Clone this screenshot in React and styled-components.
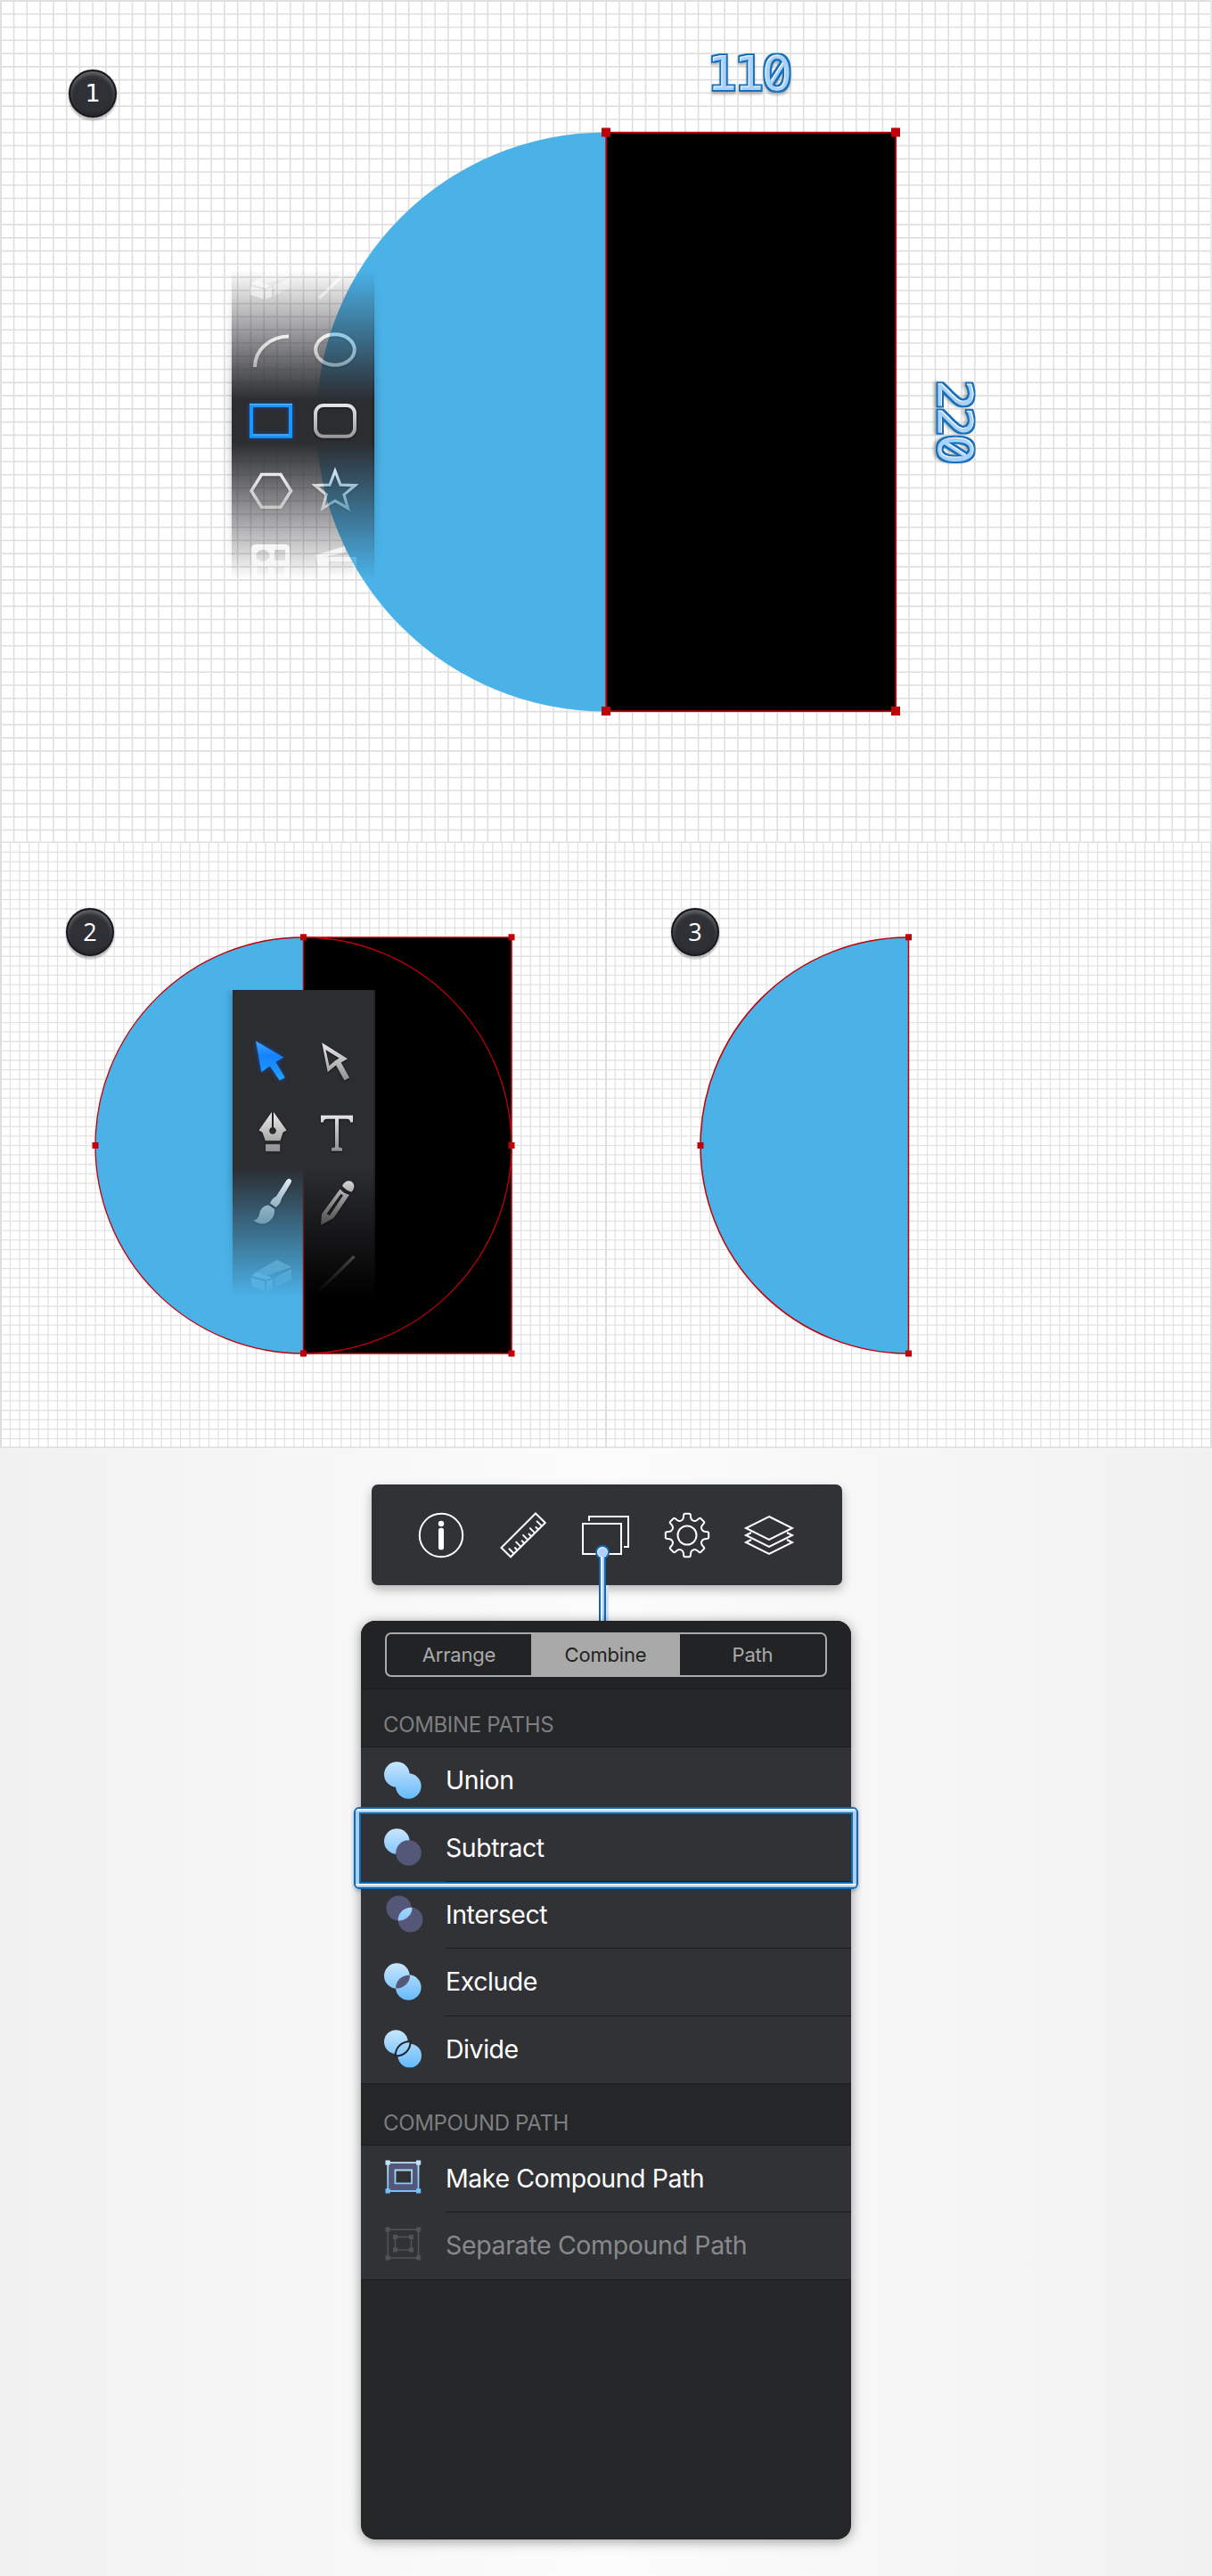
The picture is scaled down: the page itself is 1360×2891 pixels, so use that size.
import React from "react";
import styled, { createGlobalStyle, css } from "styled-components";

const BLUE = "#4bb2e8";
const RED = "#bf0008";
const UI = '"Inter", "Liberation Sans", sans-serif';

const GlobalStyle = createGlobalStyle`
  * { box-sizing: border-box; }
  body { margin: 0; background: #fff; }
`;

const Page = styled.main`
  width: 1360px;
  height: 2891px;
  display: flex;
  flex-direction: column;
  overflow: hidden;
  font-family: ${UI};
`;

const Split = styled.div`
  display: grid;
  grid-template-columns: 679px 681px;
`;

const Stage = styled.section`
  position: relative;
  height: ${(p) => p.$height}px;
`;

const Artboard = styled.svg`
  display: block;
  width: 100%;
  height: 100%;
`;

const Badge = styled.span`
  position: absolute;
  left: ${(p) => p.$x}px;
  top: ${(p) => p.$y}px;
  width: 54px;
  height: 54px;
  border-radius: 50%;
  border: 2px solid #17181c;
  background: #303136;
  box-shadow: inset 0 3px 4px rgba(255, 255, 255, 0.32), inset 0 0 5px rgba(0, 0, 0, 0.5),
    0 4px 1px rgba(0, 0, 0, 0.14), 0 1px 3px rgba(0, 0, 0, 0.25);
  display: flex;
  align-items: center;
  justify-content: center;
  color: #fff;
  font: 400 27px/50px "Open Sans", "Noto Sans", sans-serif;
  ${(p) => p.$footed && css`font-family: "DejaVu Sans", sans-serif;`}
`;

const Measure = styled.span`
  position: absolute;
  left: ${(p) => p.$x}px;
  top: ${(p) => p.$y}px;
  width: 100px;
  height: 56px;
  display: flex;
  justify-content: center;
  font: 400 54px/56px "DejaVu Sans", sans-serif;
  letter-spacing: -4px;
  color: #a9d1fa;
  filter: url(#bevel);
  transform: rotate(${(p) => p.$turn || 0}deg);
`;

const Zero = styled.span`
  position: relative;

  &::after {
    content: "";
    position: absolute;
    left: 15.2px;
    top: 13.5px;
    width: 4px;
    height: 27px;
    background: #a9d1fa;
    transform: rotate(33deg);
  }
`;

const StripFade = styled.div`
  position: absolute;
  left: ${(p) => p.$x}px;
  top: ${(p) => p.$y}px;
  padding: 0 12px;
  mask-image: linear-gradient(${(p) => p.$fade});
`;

const Strip = styled.div`
  width: 160px;
  padding: ${(p) => p.$top || 0}px 8px 0 8px;
  display: grid;
  grid-template-columns: 72px 72px;
  grid-auto-rows: 79px;
  place-items: center;
  background: #2c2d31;
  box-shadow: inset -2px 0 #222327, 0 0 10px rgba(0, 0, 0, 0.35);
`;

const ToolIcon = styled.svg`
  width: 54px;
  height: 54px;
  margin-bottom: 1px;
  overflow: visible;
  filter: ${(p) =>
    p.$active
      ? "drop-shadow(0 0 2px rgba(0, 100, 255, 0.7))"
      : "drop-shadow(0 1px 1px rgba(0, 0, 0, 0.55))"};
`;

const Inspector = styled.section`
  height: 1266px;
  display: flex;
  flex-direction: column;
  align-items: center;
  padding-top: 41px;
  gap: 40px;
  background: linear-gradient(90deg, #f1f1f1, #f8f8f8 32%, #fcfcfc 50%, #f8f8f8 68%, #f1f1f1);
`;

const Toolbar = styled.nav`
  position: relative;
  left: 1px;
  width: 528px;
  height: 113px;
  padding-left: 51px;
  display: flex;
  align-items: center;
  gap: 38px;
  border-radius: 7px;
  background: #313236;
  box-shadow: 0 5px 12px rgba(0, 0, 0, 0.28);
`;

const BarIcon = styled.svg`
  width: 54px;
  height: 54px;
  fill: none;
  stroke: #fff;
  stroke-width: 2;
  overflow: visible;
`;

const Connector = styled.svg`
  position: absolute;
  left: 249px;
  top: 66px;
  width: 20px;
  height: 87px;
`;

const Menu = styled.div`
  width: 550px;
  height: 1031px;
  display: flex;
  flex-direction: column;
  border-radius: 16px;
  background: #252628;
  box-shadow: 0 2px 14px rgba(0, 0, 0, 0.4);
  z-index: 1;
`;

const MenuHeader = styled.header`
  height: 77px;
  padding: 13px 27px 0;
  border-bottom: 1px solid #1c1d1f;
  border-radius: 16px 16px 0 0;
  background: #222325;
`;

const Segments = styled.div`
  height: 50px;
  display: grid;
  grid-template-columns: 162px 167px 1fr;
  border: 2px solid #aaa;
  border-radius: 7px;
`;

const Segment = styled.button`
  border: 0;
  padding: 0 0 1px;
  font: 400 22px ${UI};
  letter-spacing: -0.2px;
  color: ${(p) => (p.$on ? "#222325" : "#aaa")};
  background: ${(p) => (p.$on ? "#a9a9a9" : "transparent")};
`;

const SectionLabel = styled.h2`
  margin: 0;
  height: ${(p) => p.$height}px;
  padding: 0 0 8px 25px;
  display: flex;
  align-items: flex-end;
  font: 400 24px/32px ${UI};
  letter-spacing: -0.35px;
  color: #7d7e80;
`;

const Rows = styled.ul`
  list-style: none;
  margin: 0;
  padding: 0;
  background: #313236;
  border-top: 1px solid #1c1d1f;
  border-bottom: 1px solid #1c1d1f;
`;

const Row = styled.li`
  position: relative;
  height: ${(p) => p.$height || 75.4}px;
  padding-left: 26px;
  display: flex;
  align-items: center;
  gap: 27px;
`;

const RowIcon = styled.svg`
  width: 42px;
  height: 42px;
  margin-bottom: 2px;
  flex: none;
  overflow: visible;
`;

const RowText = styled.span`
  flex: 1;
  align-self: stretch;
  display: flex;
  align-items: center;
  padding-bottom: 1px;
  font: 400 28.5px ${UI};
  letter-spacing: ${(p) => (p.$muted ? -0.35 : -0.45)}px;
  color: ${(p) => (p.$muted ? "#88898c" : "#fff")};
  border-bottom: 1px solid ${(p) => (p.$last ? "transparent" : "#1c1d1f")};
`;

const Highlight = styled.div`
  position: absolute;
  left: -8px;
  right: -8px;
  top: -8px;
  bottom: -8px;
  border: 2px solid #1169b0;
  border-radius: 6px;
  box-shadow: 0 2px 4px rgba(0, 60, 120, 0.35);

  &::before {
    content: "";
    position: absolute;
    inset: 0;
    border: 4px solid #a9cef8;
    border-radius: 4px;
    box-shadow: inset 0 0 0 2px #1169b0;
  }
  &::after {
    content: "";
    position: absolute;
    inset: 0 1px 2px;
    border: solid #edf5ff;
    border-width: 2px 0;
    border-radius: 3px 3px 0 0;
  }
`;

function gridPath(x0, y0, x1, y1, ax, ay, step) {
  let d = "";
  for (let x = ax - Math.floor((ax - x0) / step) * step; x < x1; x += step) d += `M${x.toFixed(2)} ${y0}V${y1}`;
  for (let y = ay - Math.floor((ay - y0) / step) * step; y < y1; y += step) d += `M${x0} ${y.toFixed(2)}H${x1}`;
  return d;
}

const Handles = ({ points, size }) =>
  points.map(([x, y]) => (
    <rect key={`${x}-${y}`} x={x - size / 2} y={y - size / 2} width={size} height={size} fill={RED} />
  ));

const Defs = () => (
  <defs>
    <linearGradient id="metal" gradientUnits="userSpaceOnUse" x1="0" y1="4" x2="0" y2="50">
      <stop offset="0" stopColor="#f0f0f0" />
      <stop offset="1" stopColor="#909090" />
    </linearGradient>
    <linearGradient id="active" gradientUnits="userSpaceOnUse" x1="0" y1="4" x2="0" y2="50">
      <stop offset="0" stopColor="#43a5ff" />
      <stop offset="0.4" stopColor="#1282ff" />
      <stop offset="1" stopColor="#27a3ff" />
    </linearGradient>
    <linearGradient id="sky" gradientUnits="userSpaceOnUse" x1="0" y1="0" x2="0" y2="42">
      <stop offset="0" stopColor="#c9e6fd" />
      <stop offset="1" stopColor="#65bafb" />
    </linearGradient>
    <filter id="bevel" x="-20%" y="-20%" width="140%" height="150%" colorInterpolationFilters="sRGB">
      <feMorphology in="SourceAlpha" operator="dilate" radius="1.5" result="fat" />
      <feFlood floodColor="#1870b8" />
      <feComposite in2="fat" operator="in" result="outline" />
      <feOffset in="SourceAlpha" dx="1" dy="1" result="moved" />
      <feFlood floodColor="#f2f8ff" />
      <feComposite in2="SourceAlpha" operator="in" />
      <feComposite in2="moved" operator="out" result="shine" />
      <feGaussianBlur in="fat" stdDeviation="1.5" />
      <feOffset dy="3" result="soft" />
      <feComponentTransfer in="soft" result="shadow">
        <feFuncA type="linear" slope="0.25" />
      </feComponentTransfer>
      <feMerge>
        <feMergeNode in="shadow" />
        <feMergeNode in="outline" />
        <feMergeNode in="SourceGraphic" />
        <feMergeNode in="shine" />
      </feMerge>
    </filter>
  </defs>
);

const M = "url(#metal)";

const tools = {
  eraser: (
    <g fill={M}>
      <path d="M5 30L33 14L49 22L21 32Z" opacity=".6" />
      <path d="M30 34L49 24V36L31 45Z" opacity=".6" />
      <path d="M4 32L11 28L27 34L21 36.5Z" />
      <path d="M4 34L19 38V49L4 44Z" />
      <path d="M21 38L28 35.500V46L21 49Z" />
    </g>
  ),
  line: <path d="M9 48L47.500 10" stroke={M} strokeWidth="3.6" fill="none" />,
  arc: <path d="M9 46A38 34.500 0 0 1 47 11.500" stroke={M} strokeWidth="4" fill="none" />,
  ellipse: <ellipse cx="27" cy="26.500" rx="21.800" ry="17.200" stroke={M} strokeWidth="4" fill="none" />,
  rect: (
    <>
      <rect x="5" y="10" width="44" height="34.700" stroke="#1a97ff" strokeWidth="4" fill="none" />
      <path d="M3 8.700H51M7 42.800H47" stroke="#57b6ff" strokeWidth="1.300" />
    </>
  ),
  round: <rect x="5" y="10" width="44" height="34.700" rx="9" stroke={M} strokeWidth="4" fill="none" />,
  hexagon: <path d="M16.500 8.500H38L49.500 27L38 45.300H16.500L5 27Z" stroke={M} strokeWidth="3.600" fill="none" />,
  star: (
    <path
      d="M27 4.500L33 20.200L49.500 20.800L37 31.200L41.500 46.500L27 38L13 46.500L17.200 31.200L4.500 20.800L21 20.200Z"
      stroke={M}
      strokeWidth="3.200"
      fill="none"
    />
  ),
  shapes: (
    <path
      fill={M}
      fillRule="evenodd"
      d="M10 8H43Q48 8 48 13V45H5V13Q5 8 10 8ZM18 14A7 6 0 1 0 18 27A7 6 0 1 0 18 14ZM31 14H43V26H31ZM12 33H24V42H12ZM31 33H42V42H31Z"
    />
  ),
  cards: (
    <path fill={M} fillRule="evenodd" d="M5 20L38 10V17L16 22V44H10ZM16 22H51V46H16ZM20 27H47V42H20Z" />
  ),
  pointer: <path fill="url(#active)" d="M9 5.200L40.200 23.800L31.300 28.800L41.800 46.500L35.700 49.500L24.700 33.200L15.300 40.200Z" />,
  direct: (
    <path
      fill={M}
      fillRule="evenodd"
      d="M11.300 7.200L40 25.200L32.700 29.500L42 46.500L36.500 49.500L27 32.500L17.700 40.200ZM15.500 15.200L30.500 24.500L26 27.500L19.500 33Z"
    />
  ),
  pen: (
    <path
      fill={M}
      fillRule="evenodd"
      d="M27 6V23.300A3.800 3.800 0 1 0 29 23.300V6L43.500 26.500L39.500 29L36.500 38.200H19.800L16.500 29L12.500 26.500ZM20 42.200H36.200V50.200H20Z"
    />
  ),
  type: (
    <path
      fill={M}
      d="M10 9.800H46V17.500H43Q43 13.800 39 13.800H30V45.500L34 46.500V49.800H22V46.500L26 45.500V13.800H17Q13 13.800 13 17.500H10Z"
    />
  ),
  brush: (
    <path
      fill={M}
      d="M43.500 3.500Q46 0.500 48.500 3Q50 4.500 48 7.500L38 24Q37 30 31.500 34L25 29.500Q27 24 32 21.500ZM23.500 31.500L30 36Q31 46 22 51Q14 55 6.500 48.500Q12 48 13 41Q15 32 23.500 31.500Z"
    />
  ),
  pencil: (
    <>
      <path fill={M} d="M35 8Q39 2.500 44.500 5Q49 8 46.500 14L44.500 16.800Q38 15 34 10Z" />
      <path
        fill={M}
        fillRule="evenodd"
        d="M31.500 13.500Q36 18.500 42 20L24.500 46L10 54L11 41.500ZM32.500 19L16.500 41.500L20 43L35 20.500ZM31.500 23L19.500 41"
      />
    </>
  ),
};

const Tool = ({ name, active }) => (
  <ToolIcon viewBox="0 0 54 54" $active={active}>
    {tools[name]}
  </ToolIcon>
);

const gear = (() => {
  let d = "";
  const at = (x, y, i) => {
    const a = (i * Math.PI) / 4;
    return `${(27 + x * Math.cos(a) - y * Math.sin(a)).toFixed(2)} ${(27 + x * Math.sin(a) + y * Math.cos(a)).toFixed(2)}`;
  };
  for (let i = 0; i < 8; i++) {
    d += `${i ? "L" : "M"}${at(-4.2, -19.5, i)}L${at(-3.8, -23, i)}Q${at(-3.6, -24.2, i)} ${at(-2.4, -24.2, i)}`;
    d += `L${at(2.4, -24.2, i)}Q${at(3.6, -24.2, i)} ${at(3.8, -23, i)}L${at(4.2, -19.5, i)}`;
    d += `A4.300 4.300 0 0 0 ${at(-4.2, -19.5, i + 1)}`;
  }
  return d + "Z";
})();

const rulerTicks = Array.from({ length: 9 }, (_, i) => {
  const t = (i + 1) / 10;
  const x = 13 + 39 * t;
  const y = 51.7 - 38.7 * t;
  const n = i % 2 ? 3.4 : 6;
  return `M${x} ${y}l${-n} ${-n}`;
}).join("");

const barIcons = [
  <>
    <circle cx="27" cy="27" r="24.200" />
    <circle cx="27" cy="14" r="3.200" fill="#fff" stroke="none" />
    <rect x="24" y="18.700" width="6" height="24.600" rx="2.600" fill="#fff" stroke="none" />
  </>,
  <>
    <path d="M41 2.500L51.800 13L13 51.300L2.500 41Z" />
    <path d={rulerTicks} />
  </>,
  <>
    <path d="M2 14H45V48H2ZM9 11V6H53V40H48" />
  </>,
  <>
    <path d={gear} />
    <circle cx="27" cy="27" r="10.500" />
  </>,
  <>
    <path d="M27 6L53 19L27 32L1 19Z" />
    <path d="M7 24L1 27L27 40L53 27L47 24" />
    <path d="M7 32L1 35L27 48L53 35L47 32" />
  </>,
];

const LENS = "M29 13.800A14.500 14.500 0 0 0 13 28.300A14.500 14.500 0 0 0 29 13.800Z";
const DUSK = "#555778";

const rowIcons = {
  union: (
    <g fill="url(#sky)">
      <circle cx="14.300" cy="14.500" r="14.300" />
      <circle cx="27.300" cy="27.500" r="14.300" />
    </g>
  ),
  subtract: (
    <>
      <circle cx="14.300" cy="14.500" r="14.300" fill="url(#sky)" />
      <circle cx="27.500" cy="27.500" r="14.300" fill={DUSK} />
    </>
  ),
  intersect: (
    <g transform="translate(2.500 0)">
      <circle cx="14" cy="14.500" r="14" fill={DUSK} />
      <circle cx="27" cy="27.500" r="14" fill={DUSK} />
      <path d={LENS} fill="url(#sky)" />
    </g>
  ),
  exclude: (
    <>
      <circle cx="14.300" cy="14.500" r="14.300" fill="url(#sky)" />
      <circle cx="27.300" cy="27.500" r="14.300" fill="url(#sky)" />
      <path d={LENS} fill={DUSK} />
    </>
  ),
  divide: (
    <>
      <circle cx="13.300" cy="13.500" r="13.300" fill="url(#sky)" />
      <circle cx="28.700" cy="29" r="13.300" fill="url(#sky)" />
      <path
        d="M29.500 13.300A15.500 15.500 0 0 0 12.700 29.300A15.500 15.500 0 0 0 29.500 13.300Z"
        fill="url(#sky)"
        stroke="#1f252b"
        strokeWidth="2"
      />
    </>
  ),
  make: (
    <g stroke="url(#sky)" strokeWidth="1.800">
      <path d="M4.200 4.200H38.500V36H4.200Z" fill={DUSK} />
      <path d="M12.500 12.500H31V27.300H12.500Z" fill="#313236" />
      <path d="M1.500 1.500h5.200v5.200h-5.200zM36 1.500h5.200v5.200h-5.200zM1.500 33.300h5.200v5.200h-5.200zM36 33.300h5.200v5.200h-5.200z" fill="url(#sky)" stroke="none" />
    </g>
  ),
  separate: (
    <g stroke="#525357" strokeWidth="1.500" fill="none">
      <path d="M4.200 4.200H38.500V36H4.200ZM12.500 12.500H30.500V27H12.500Z" />
      <path
        d="M1.500 1.500h5.200v5.200h-5.200zM36 1.500h5.200v5.200h-5.200zM1.500 33.300h5.200v5.200h-5.200zM36 33.300h5.200v5.200h-5.200zM10 10h5v5h-5zM28 10h5v5h-5zM10 24.500h5v5h-5zM28 24.500h5v5h-5z"
        fill="#525357"
        stroke="none"
      />
    </g>
  ),
};

const combineRows = [
  ["union", "Union"],
  ["subtract", "Subtract"],
  ["intersect", "Intersect"],
  ["exclude", "Exclude"],
  ["divide", "Divide"],
];

export default function App() {
  return (
    <Page>
      <GlobalStyle />
      <Stage $height={946}>
        <Artboard viewBox="0 0 1360 946">
          <Defs />
          <path d={gridPath(2, 2, 1360, 945, 680.2, 148.7, 14.77)} stroke="#000" strokeOpacity=".125" strokeWidth="1.600" />
          <path d="M1 946V1H1360M0 945.500H1360" stroke="#e0e0e0" strokeWidth="2" fill="none" />
          <path d="M1359 0V946" stroke="#e8e8e8" strokeWidth="2" />
          <path d="M680 148.500A325 325 0 0 0 680 798.500Z" fill={BLUE} />
          <rect x="680.200" y="148.700" width="325" height="649.500" fill="#000" stroke={RED} strokeWidth="1.800" />
          <Handles size={10} points={[[680, 148.500], [1005, 148.500], [680, 798], [1005, 798]]} />
        </Artboard>
        <Badge $x={77} $y={78} $footed>1</Badge>
        <Measure $x={789.5} $y={55}>
          11<Zero>0</Zero>
        </Measure>
        <Measure $x={1020.5} $y={444} $turn={90}>
          22<Zero>0</Zero>
        </Measure>
        <StripFade $x={248} $y={275} $fade="transparent 7%, #000 44%, #000 56%, transparent 95%">
          <Strip>
            <Tool name="eraser" />
            <Tool name="line" />
            <Tool name="arc" />
            <Tool name="ellipse" />
            <Tool name="rect" active />
            <Tool name="round" />
            <Tool name="hexagon" />
            <Tool name="star" />
            <Tool name="shapes" />
            <Tool name="cards" />
          </Strip>
        </StripFade>
      </Stage>
      <Split>
        <Stage $height={679}>
          <Artboard viewBox="0 946 679 679">
            <path d={gridPath(2, 946, 679, 1624, 340.5, 1052, 10.615)} stroke="#000" strokeOpacity=".115" strokeWidth="1.300" />
            <path d="M1 946V1625M0 1624.500H679" stroke="#dedede" strokeWidth="2" />
            <circle cx="340.500" cy="1285.500" r="233.500" fill={BLUE} />
            <rect x="340.500" y="1052" width="233.500" height="467" fill="#000" stroke={RED} strokeWidth="1.500" />
            <circle cx="340.500" cy="1285.500" r="233.500" fill="none" stroke={RED} strokeWidth="1.300" />
            <Handles
              size={7}
              points={[[340.5, 1051.8], [574, 1051.8], [107, 1285.5], [574, 1285.5], [340.5, 1519], [574, 1519]]}
            />
          </Artboard>
          <Badge $x={74} $y={73}>2</Badge>
          <StripFade $x={249} $y={165} $fade="#000 56%, transparent 97%">
            <Strip $top={40}>
              <Tool name="pointer" active />
              <Tool name="direct" />
              <Tool name="pen" />
              <Tool name="type" />
              <Tool name="brush" />
              <Tool name="pencil" />
              <Tool name="eraser" />
              <Tool name="line" />
            </Strip>
          </StripFade>
        </Stage>
        <Stage $height={679}>
          <Artboard viewBox="679 946 681 679">
            <path d={gridPath(681, 946, 1360, 1624, 1019.3, 1052, 10.615)} stroke="#000" strokeOpacity=".115" strokeWidth="1.300" />
            <path d="M680 946V1625M679 1624.500H1360M1359 946V1625" stroke="#dedede" strokeWidth="2" />
            <path
              d="M1019.500 1052A233.500 233.500 0 0 0 1019.500 1519Z"
              fill={BLUE}
              stroke={RED}
              strokeWidth="1.500"
            />
            <Handles size={7} points={[[1019.5, 1051.8], [786, 1285.5], [1019.5, 1519]]} />
          </Artboard>
          <Badge $x={74} $y={73}>3</Badge>
        </Stage>
      </Split>
      <Inspector>
        <Toolbar>
          {barIcons.map((icon, i) => (
            <BarIcon key={i} viewBox="0 0 54 54">
              {icon}
            </BarIcon>
          ))}
          <Connector viewBox="0 0 20 87">
            <rect x="14" y="47" width="3" height="40" fill="#d3e0ee" />
            <rect x="6" y="10" width="8" height="77" fill="#1169b0" />
            <circle cx="10" cy="10" r="8" fill="#1169b0" />
            <circle cx="10" cy="10" r="6" fill="#e6f0ff" />
            <rect x="8" y="12" width="2" height="75" fill="#fff" />
            <rect x="10" y="12" width="2" height="75" fill="#a9cef8" />
            <circle cx="10.300" cy="10.500" r="5" fill="#b0cffb" />
          </Connector>
        </Toolbar>
        <Menu>
          <MenuHeader>
            <Segments>
              <Segment>Arrange</Segment>
              <Segment $on>Combine</Segment>
              <Segment>Path</Segment>
            </Segments>
          </MenuHeader>
          <SectionLabel $height={64}>COMBINE PATHS</SectionLabel>
          <Rows>
            {combineRows.map(([id, label], i) => (
              <Row key={id}>
                <RowIcon viewBox="0 0 42 42">{rowIcons[id]}</RowIcon>
                <RowText $last={i === 4}>{label}</RowText>
                {id === "subtract" && <Highlight />}
              </Row>
            ))}
          </Rows>
          <SectionLabel $height={68}>COMPOUND PATH</SectionLabel>
          <Rows>
            <Row $height={75}>
              <RowIcon viewBox="0 0 42 42">{rowIcons.make}</RowIcon>
              <RowText>Make Compound Path</RowText>
            </Row>
            <Row $height={75}>
              <RowIcon viewBox="0 0 42 42">{rowIcons.separate}</RowIcon>
              <RowText $muted $last>Separate Compound Path</RowText>
            </Row>
          </Rows>
        </Menu>
      </Inspector>
    </Page>
  );
}
